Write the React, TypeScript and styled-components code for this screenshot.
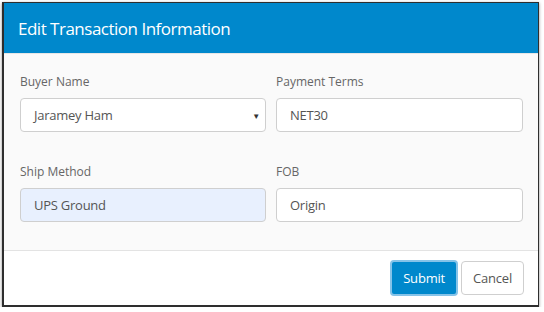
import styled, { createGlobalStyle } from "styled-components";

const GlobalStyle = createGlobalStyle`
  html, body {
    margin: 0;
    padding: 0;
    background: #ffffff;
  }
  body {
    font-family: "Open Sans", "Noto Sans", Arial, sans-serif;
  }
`;

const Page = styled.div`
  padding: 2px 0 0 2px;
`;

const Modal = styled.div`
  width: 534px;
  border: 1px solid #2e2e2e;
  border-left-width: 2px;
  border-bottom-width: 2px;
  box-shadow: 0 1px 3px rgba(0, 0, 0, 0.45);
  background: #fff;
`;

const Header = styled.div`
  height: 50px;
  background: #0088cc;
  display: flex;
  align-items: center;
  padding: 0 14px;
  border-bottom: 1px solid #e6e6e6;

  h1 {
    margin: 0;
    font-size: 17px;
    font-weight: 400;
    color: #fff;
    letter-spacing: -0.5px;
  }
`;

const Body = styled.div`
  background: #fafafa;
  padding: 19px 15px 28px 16px;
  display: grid;
  grid-template-columns: 246px 247px;
  column-gap: 10px;
  row-gap: 31px;
  border-bottom: 1px solid #e3e3e3;
`;

const Field = styled.div`
  display: flex;
  flex-direction: column;
  gap: 7px;
`;

const Label = styled.label`
  font-size: 12px;
  color: #666;
  line-height: 18px;
`;

const Control = styled.div<{ $filled?: boolean }>`
  position: relative;
  height: 34px;
  box-sizing: border-box;
  border: 1px solid #cfcfcf;
  border-radius: 4px;
  background: ${(p) => (p.$filled ? "#e8f0fe" : "#fff")};
  display: flex;
  align-items: center;
  padding: 0 13px;
  font-size: 13px;
  letter-spacing: -0.25px;
  color: #555;
`;

const Caret = styled.span`
  position: absolute;
  right: 5px;
  top: 50%;
  transform: translateY(-50%);
  font-size: 8px;
  color: #333;
`;

const Footer = styled.div`
  height: 54px;
  display: flex;
  align-items: center;
  justify-content: flex-end;
  gap: 3px;
  padding: 0 14px;
`;

const Button = styled.button<{ $primary?: boolean }>`
  font-family: inherit;
  font-size: 13px;
  letter-spacing: -0.2px;
  height: ${(p) => (p.$primary ? "36px" : "34px")};
  padding: 0 11px;
  border-radius: 4px;
  cursor: pointer;
  background: ${(p) => (p.$primary ? "#0088cc" : "#fff")};
  color: ${(p) => (p.$primary ? "#fff" : "#555")};
  border: ${(p) => (p.$primary ? "2px solid #86c3e8" : "1px solid #cfcfcf")};
`;

const fields = [
  { label: "Buyer Name", value: "Jaramey Ham", select: true },
  { label: "Payment Terms", value: "NET30" },
  { label: "Ship Method", value: "UPS Ground", filled: true },
  { label: "FOB", value: "Origin" },
];

export default function App() {
  return (
    <Page>
      <GlobalStyle />
      <Modal>
        <Header>
          <h1>Edit Transaction Information</h1>
        </Header>
        <Body>
          {fields.map((f) => (
            <Field key={f.label}>
              <Label>{f.label}</Label>
              <Control $filled={f.filled}>
                {f.value}
                {f.select && <Caret>▼</Caret>}
              </Control>
            </Field>
          ))}
        </Body>
        <Footer>
          <Button $primary>Submit</Button>
          <Button>Cancel</Button>
        </Footer>
      </Modal>
    </Page>
  );
}
